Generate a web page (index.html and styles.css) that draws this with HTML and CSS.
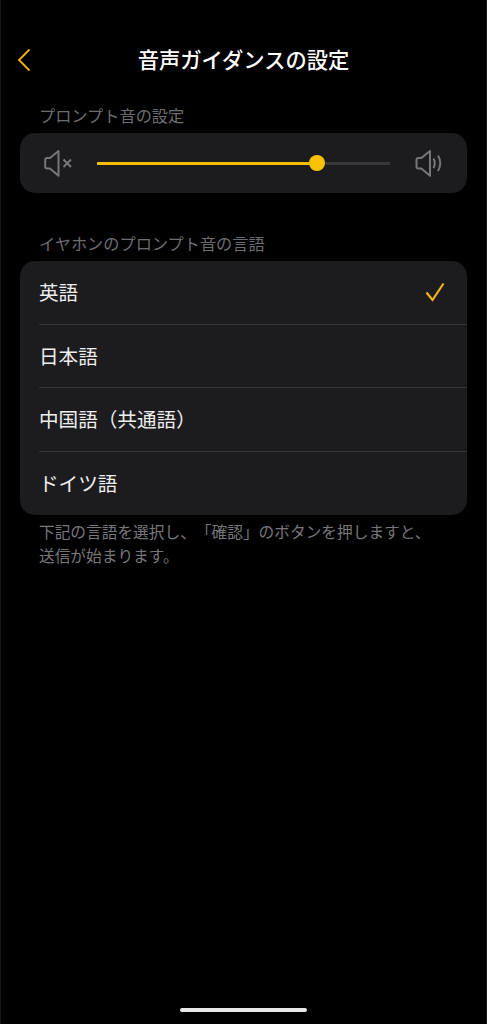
FILE: index.html
```html
<!DOCTYPE html>
<html lang="ja">
<head>
<meta charset="utf-8">
<title>音声ガイダンスの設定</title>
<link rel="stylesheet" href="styles.css">
</head>
<body>
<div class="screen">
  <header class="nav">
    <svg class="back" viewBox="0 0 14 24" width="14" height="24"><path d="M12.5 1.5 L2 12 L12.5 22.5"/></svg>
    <h1 class="title">音声ガイダンスの設定</h1>
  </header>
  <p class="section-label first">プロンプト音の設定</p>
  <div class="card slider-card">
    <svg class="vol" viewBox="0 0 30 28" width="30" height="28"><path class="stroke" d="M1.2 11 V17.5 Q1.2 19.5 3.2 19.5 H6 L14.5 26.8 V2 L6 9 H3.2 Q1.2 9 1.2 11 Z"/><path class="stroke" d="M19.5 10.5 L27 18 M27 10.5 L19.5 18"/></svg>
    <div class="track">
      <div class="fill"></div>
      <div class="thumb"></div>
    </div>
    <svg class="vol" viewBox="0 0 30 28" width="30" height="28"><path class="stroke" d="M3.5 11 V17.5 Q3.5 19.5 5.5 19.5 H8.3 L17 26.8 V2 L8.3 9 H5.5 Q3.5 9 3.5 11 Z"/><path class="stroke" d="M20.5 9.5 Q23 14.2 20.5 19 M25 6.5 Q29.5 14.2 25 22"/></svg>
  </div>
  <p class="section-label second">イヤホンのプロンプト音の言語</p>
  <div class="card list">
    <div class="row"><span class="row-text">英語</span><svg class="check" viewBox="0 0 20 20" width="20" height="20"><path d="M1.5 10.5 L7.5 18 L18.5 1.5"/></svg></div>
    <div class="row"><span class="row-text">日本語</span></div>
    <div class="row"><span class="row-text">中国語（共通語）</span></div>
    <div class="row"><span class="row-text">ドイツ語</span></div>
  </div>
  <p class="note">下記の言語を選択し、「確認」のボタンを押しますと、<br>送信が始まります。</p>
  <div class="home-bar"></div>
</div>
</body>
</html>
```
FILE: styles.css
```css
* { box-sizing: border-box; }
html, body { margin: 0; padding: 0; background: #000; }
.screen {
  width: 487px;
  height: 1024px;
  background: #000;
  box-shadow: inset 1px 0 #161616, inset -1px 0 #161616;
  display: flex;
  flex-direction: column;
  padding: 0 20px;
  font-family: "Noto Sans CJK JP", "Noto Sans", sans-serif;
  text-spacing-trim: space-all;
  position: relative;
  overflow: hidden;
}
.nav {
  height: 40px;
  margin-top: 39px;
  position: relative;
  display: flex;
  align-items: center;
  justify-content: center;
}
.back {
  position: absolute;
  left: -3px;
  top: 9px;
}
.back path { fill: none; stroke: #f0b400; stroke-width: 1.8; }
.title {
  margin: 0;
  font-size: 21.3px;
  font-weight: 500;
  color: #fff;
  line-height: 40px;
}
.section-label {
  margin: 0;
  padding-left: 19px;
  font-size: 16.2px;
  line-height: 24px;
  color: #6d6d70;
}
.section-label.first { margin-top: 24px; }
.section-label.second { margin-top: 38px; }
.card {
  background: #1c1c1e;
  border-radius: 15px;
}
.slider-card {
  margin-top: 6px;
  height: 60px;
  display: flex;
  align-items: center;
  padding: 0 24px;
  justify-content: space-between;
}
.vol { flex: none; }
.stroke { fill: none; stroke: #77777a; stroke-width: 2; stroke-linejoin: round; }
.track {
  width: 293px;
  height: 3px;
  background: #38383a;
  position: relative;
  margin: 0 auto;
}
.fill { width: 220px; height: 3px; background: #f5bd00; }
.thumb {
  position: absolute;
  left: 212px;
  top: -6.5px;
  width: 16px;
  height: 16px;
  border-radius: 50%;
  background: #f9c200;
}
.list { margin-top: 6px; }
.row {
  height: 63.5px;
  margin-left: 19px;
  padding-right: 22px;
  display: flex;
  align-items: center;
  justify-content: space-between;
  font-size: 19.6px;
  color: #eeeeee;
  border-bottom: 1px solid #323234;
}
.row:last-child { border-bottom: none; }
.row-text { margin-bottom: 1px; }
.check path { fill: none; stroke: #f5b21a; stroke-width: 2.2; }
.note {
  margin: 5px 19px 0;
  font-size: 15.7px;
  line-height: 24px;
  color: #77777a;
}
.home-bar {
  position: absolute;
  left: 180px;
  top: 1008px;
  width: 127px;
  height: 4px;
  border-radius: 2px;
  background: #e8e8e8;
}
```
